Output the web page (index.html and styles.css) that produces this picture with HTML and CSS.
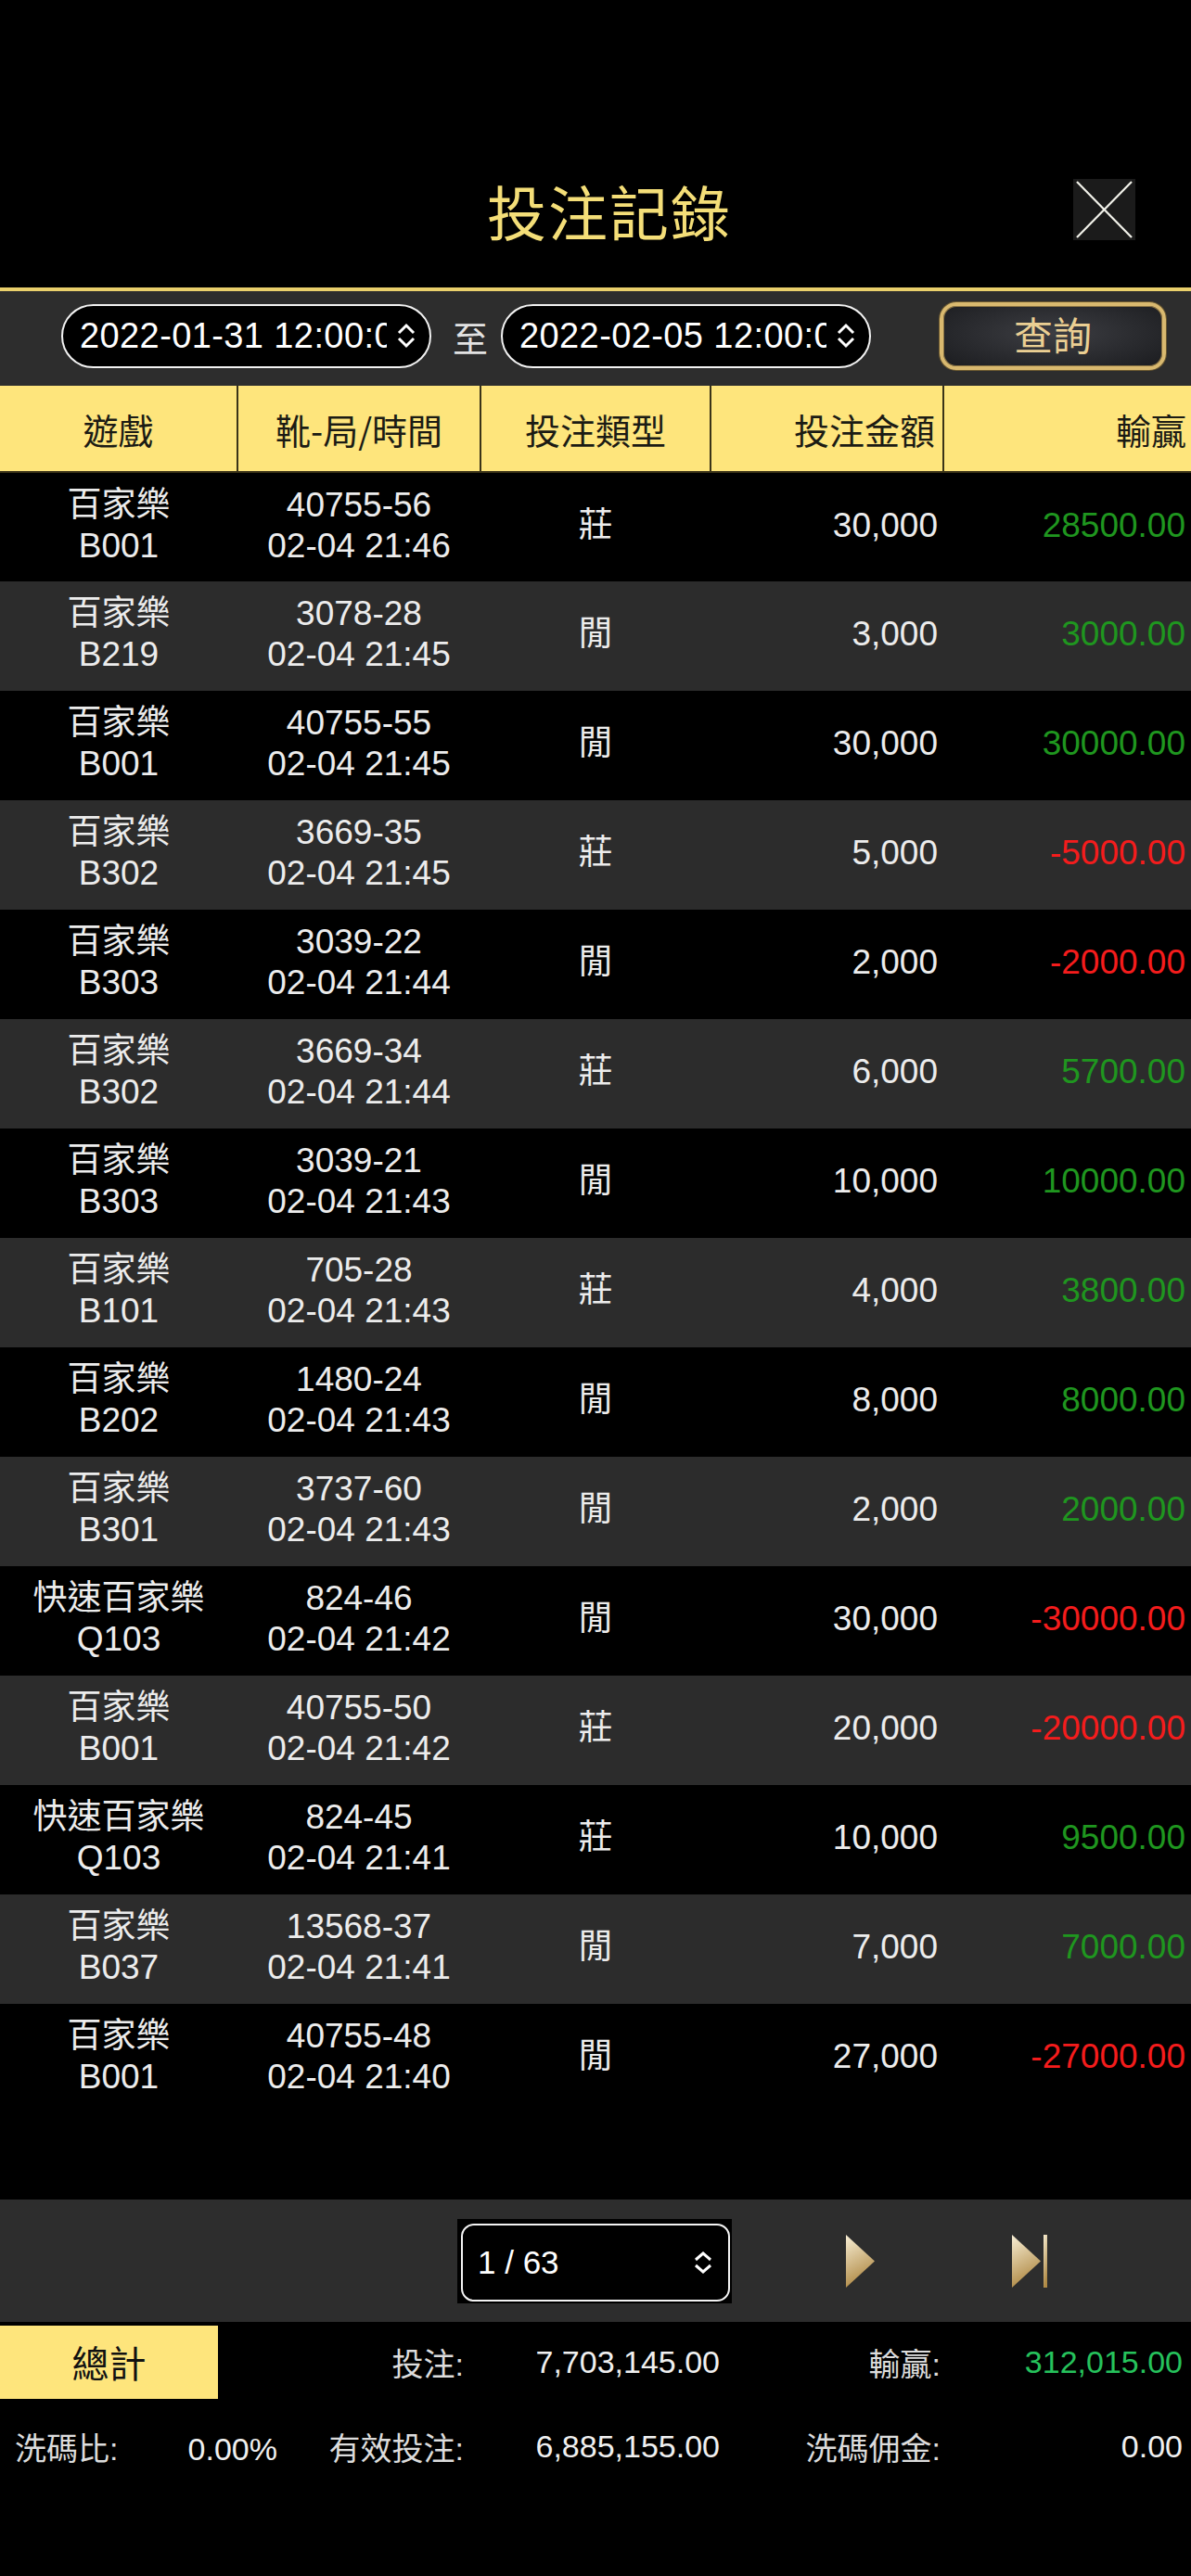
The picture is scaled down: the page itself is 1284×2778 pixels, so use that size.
FILE: index.html
```html
<!DOCTYPE html>
<html lang="zh-Hant">
<head>
<meta charset="utf-8">
<title>投注記錄</title>
<link rel="stylesheet" href="styles.css">
</head>
<body>
<div class="page">
  <header class="topbar">
    <div></div>
    <h1 class="title">投注記錄</h1>
    <button class="close" aria-label="close">
      <svg width="67" height="66" viewBox="0 0 67 66"><rect width="67" height="66" fill="#1b1b1b"/><line x1="4" y1="3" x2="63" y2="63" stroke="#f2f2ea" stroke-width="2.2"/><line x1="63" y1="3" x2="4" y2="63" stroke="#f2f2ea" stroke-width="2.2"/></svg>
    </button>
  </header>

  <div class="filter">
    <div class="pill">
      <span class="pill-text">2022-01-31 12:00:00</span>
      <svg class="chev" width="22" height="28" viewBox="0 0 22 28"><polyline points="3,11 11,3 19,11" fill="none" stroke="#fff" stroke-width="3"/><polyline points="3,17 11,25 19,17" fill="none" stroke="#fff" stroke-width="3"/></svg>
    </div>
    <span class="to">至</span>
    <div class="pill">
      <span class="pill-text">2022-02-05 12:00:00</span>
      <svg class="chev" width="22" height="28" viewBox="0 0 22 28"><polyline points="3,11 11,3 19,11" fill="none" stroke="#fff" stroke-width="3"/><polyline points="3,17 11,25 19,17" fill="none" stroke="#fff" stroke-width="3"/></svg>
    </div>
    <button class="query">查詢</button>
  </div>

  <div class="table-wrap">
    <table class="records">
      <colgroup>
        <col class="c1"><col class="c2"><col class="c3"><col class="c4"><col class="c5">
      </colgroup>
      <thead>
        <tr>
          <th class="center">遊戲</th>
          <th class="center">靴-局/時間</th>
          <th class="center">投注類型</th>
          <th class="right">投注金額</th>
          <th class="right last">輸贏</th>
        </tr>
      </thead>
      <tbody>
        <tr><td class="center">百家樂<br>B001</td><td class="center">40755-56<br>02-04 21:46</td><td class="center">莊</td><td class="right">30,000</td><td class="right win">28500.00</td></tr>
        <tr><td class="center">百家樂<br>B219</td><td class="center">3078-28<br>02-04 21:45</td><td class="center">閒</td><td class="right">3,000</td><td class="right win">3000.00</td></tr>
        <tr><td class="center">百家樂<br>B001</td><td class="center">40755-55<br>02-04 21:45</td><td class="center">閒</td><td class="right">30,000</td><td class="right win">30000.00</td></tr>
        <tr><td class="center">百家樂<br>B302</td><td class="center">3669-35<br>02-04 21:45</td><td class="center">莊</td><td class="right">5,000</td><td class="right lose">-5000.00</td></tr>
        <tr><td class="center">百家樂<br>B303</td><td class="center">3039-22<br>02-04 21:44</td><td class="center">閒</td><td class="right">2,000</td><td class="right lose">-2000.00</td></tr>
        <tr><td class="center">百家樂<br>B302</td><td class="center">3669-34<br>02-04 21:44</td><td class="center">莊</td><td class="right">6,000</td><td class="right win">5700.00</td></tr>
        <tr><td class="center">百家樂<br>B303</td><td class="center">3039-21<br>02-04 21:43</td><td class="center">閒</td><td class="right">10,000</td><td class="right win">10000.00</td></tr>
        <tr><td class="center">百家樂<br>B101</td><td class="center">705-28<br>02-04 21:43</td><td class="center">莊</td><td class="right">4,000</td><td class="right win">3800.00</td></tr>
        <tr><td class="center">百家樂<br>B202</td><td class="center">1480-24<br>02-04 21:43</td><td class="center">閒</td><td class="right">8,000</td><td class="right win">8000.00</td></tr>
        <tr><td class="center">百家樂<br>B301</td><td class="center">3737-60<br>02-04 21:43</td><td class="center">閒</td><td class="right">2,000</td><td class="right win">2000.00</td></tr>
        <tr><td class="center">快速百家樂<br>Q103</td><td class="center">824-46<br>02-04 21:42</td><td class="center">閒</td><td class="right">30,000</td><td class="right lose">-30000.00</td></tr>
        <tr><td class="center">百家樂<br>B001</td><td class="center">40755-50<br>02-04 21:42</td><td class="center">莊</td><td class="right">20,000</td><td class="right lose">-20000.00</td></tr>
        <tr><td class="center">快速百家樂<br>Q103</td><td class="center">824-45<br>02-04 21:41</td><td class="center">莊</td><td class="right">10,000</td><td class="right win">9500.00</td></tr>
        <tr><td class="center">百家樂<br>B037</td><td class="center">13568-37<br>02-04 21:41</td><td class="center">閒</td><td class="right">7,000</td><td class="right win">7000.00</td></tr>
        <tr><td class="center">百家樂<br>B001</td><td class="center">40755-48<br>02-04 21:40</td><td class="center">閒</td><td class="right">27,000</td><td class="right lose">-27000.00</td></tr>
      </tbody>
    </table>
  </div>

  <div class="pager">
    <div class="pager-select">
      <div class="pager-inner">
        <span>1 / 63</span>
        <svg width="22" height="24" viewBox="0 0 22 24"><polyline points="3,9 11,2 19,9" fill="none" stroke="#fff" stroke-width="3"/><polyline points="3,15 11,22 19,15" fill="none" stroke="#fff" stroke-width="3"/></svg>
      </div>
    </div>
    <svg class="next" width="31" height="57" viewBox="0 0 31 57">
      <defs><linearGradient id="g1" x1="0" y1="0" x2="0.3" y2="1"><stop offset="0" stop-color="#f8efd6"/><stop offset="1" stop-color="#b08a45"/></linearGradient></defs>
      <polygon points="0,0 31,28.5 0,57" fill="url(#g1)"/>
    </svg>
    <svg class="last" width="38" height="57" viewBox="0 0 38 57">
      <defs><linearGradient id="g2" x1="0" y1="0" x2="0.3" y2="1"><stop offset="0" stop-color="#f8efd6"/><stop offset="1" stop-color="#b08a45"/></linearGradient></defs>
      <polygon points="0,0 31,28.5 0,57" fill="url(#g2)"/>
      <rect x="34" y="0" width="4" height="57" fill="url(#g2)"/>
    </svg>
  </div>

  <div class="totals">
    <div class="total-badge">總計</div>
    <div class="lbl">投注:</div>
    <div class="val">7,703,145.00</div>
    <div class="lbl">輸贏:</div>
    <div class="val green">312,015.00</div>

    <div class="ratio"><span class="lbl">洗碼比:</span><span class="val">0.00%</span></div>
    <div class="lbl">有效投注:</div>
    <div class="val">6,885,155.00</div>
    <div class="lbl">洗碼佣金:</div>
    <div class="val">0.00</div>
  </div>
</div>
</body>
</html>
```

FILE: styles.css
```css
* { box-sizing: border-box; }
html, body { margin: 0; padding: 0; }
body {
  width: 1284px;
  height: 2778px;
  background: #000;
  color: #ececec;
  font-family: "Liberation Sans", "Noto Sans CJK TC", sans-serif;
  overflow: hidden;
}

.topbar {
  height: 310px;
  padding-top: 150px;
  display: grid;
  grid-template-columns: 1fr auto 1fr;
  align-items: center;
}
.title {
  margin: -8px 0 0;
  padding-left: 30px;
  font-family: "Noto Sans CJK TC", sans-serif;
  font-weight: 400;
  font-size: 64px;
  line-height: 1;
  color: #f4de78;
  letter-spacing: 2px;
}
.close {
  justify-self: end;
  margin-right: 60px;
  margin-top: -8px;
  padding: 0;
  border: 0;
  background: none;
  display: block;
  line-height: 0;
}

.filter {
  height: 106px;
  border-top: 4px solid #ead06c;
  background: #2d2d2d;
  display: flex;
  align-items: center;
  padding: 0 0 6px 66px;
}
.pill {
  width: 399px;
  height: 69px;
  border: 2px solid #f2f2f2;
  border-radius: 35px;
  background: #000;
  display: flex;
  align-items: center;
  padding: 0 14px 0 18px;
}
.pill-text {
  width: 331px;
  overflow: hidden;
  white-space: nowrap;
  font-size: 38px;
  color: #fff;
  letter-spacing: 0.4px;
}
.chev { margin-left: auto; flex: none; }
.to {
  margin: 0 14px 0 23px;
  font-family: "Noto Sans CJK TC", sans-serif;
  font-size: 38px;
  color: #e2e2e2;
}
.query {
  margin-left: 74px;
  width: 244px;
  height: 73px;
  border: 4px solid #d9b96f;
  border-radius: 18px;
  background: radial-gradient(ellipse at 50% 45%, #3d3e43 0%, #2a2b2f 55%, #1b1c1f 100%);
  box-shadow: inset 0 0 0 1px #8b7444, 0 0 0 1px #6d5a30;
  color: #ebcf93;
  font-family: "Noto Sans CJK TC", sans-serif;
  font-size: 42px;
  line-height: 1;
  padding: 0 0 4px;
}

.table-wrap {
  height: 1956px;
  overflow: hidden;
}
.records {
  width: 1284px;
  border-collapse: collapse;
  table-layout: fixed;
}
.c1 { width: 256px; }
.c2 { width: 262px; }
.c3 { width: 248px; }
.c4 { width: 251px; }
.c5 { width: 267px; }

.records th {
  height: 93px;
  background: #fee57c;
  color: #1b1b14;
  font-family: "Noto Sans CJK TC", sans-serif;
  font-weight: 400;
  font-size: 38px;
  border-right: 2px solid #3a3318;
  border-bottom: 2px solid #3a3318;
  padding: 0 8px;
}
.records th.last { border-right: 0; padding-right: 5px; }
.records td {
  height: 118px;
  font-size: 37px;
  line-height: 44px;
  padding: 0 7px 4px;
  color: #ececec;
}
.records tbody tr:nth-child(even) td { background: #2c2c2c; }
.records tbody tr:nth-child(odd) td { background: #000; }
.center { text-align: center; }
.right { text-align: right; }
.records td.right { padding-right: 6px; }
.win { color: #1f961f !important; }
.lose { color: #f41c1c !important; }

.pager {
  height: 132px;
  background: #2d2d2d;
  display: flex;
  align-items: center;
  padding-left: 493px;
}
.pager-select {
  width: 296px;
  height: 91px;
  background: #000;
  padding: 5px 2px 2px 4px;
}
.pager-inner {
  height: 100%;
  border: 2px solid #f4f4f4;
  border-radius: 14px;
  display: flex;
  align-items: center;
  justify-content: space-between;
  padding: 0 16px 0 16px;
  font-size: 35px;
  color: #fff;
}
.next { margin-left: 123px; }
.last { margin-left: 148px; }

.totals {
  margin-top: 4px;
  display: grid;
  grid-template-columns: 300px 200px 276px 238px 261px;
  grid-auto-rows: 79px;
  row-gap: 12px;
  align-items: center;
  font-size: 34px;
}
.total-badge {
  width: 235px;
  height: 79px;
  background: #fee57c;
  color: #111;
  font-family: "Noto Sans CJK TC", sans-serif;
  font-size: 40px;
  display: flex;
  align-items: center;
  justify-content: center;
  padding-bottom: 2px;
}
.totals .lbl { text-align: right; color: #dcdcdc; }
.totals .val { text-align: right; color: #f0f0f0; }
.totals .green { color: #26c25c; }
.ratio {
  display: flex;
  align-items: baseline;
  justify-content: space-between;
  padding-left: 16px;
  padding-right: 1px;
}
.ratio .lbl { text-align: left; }
```
